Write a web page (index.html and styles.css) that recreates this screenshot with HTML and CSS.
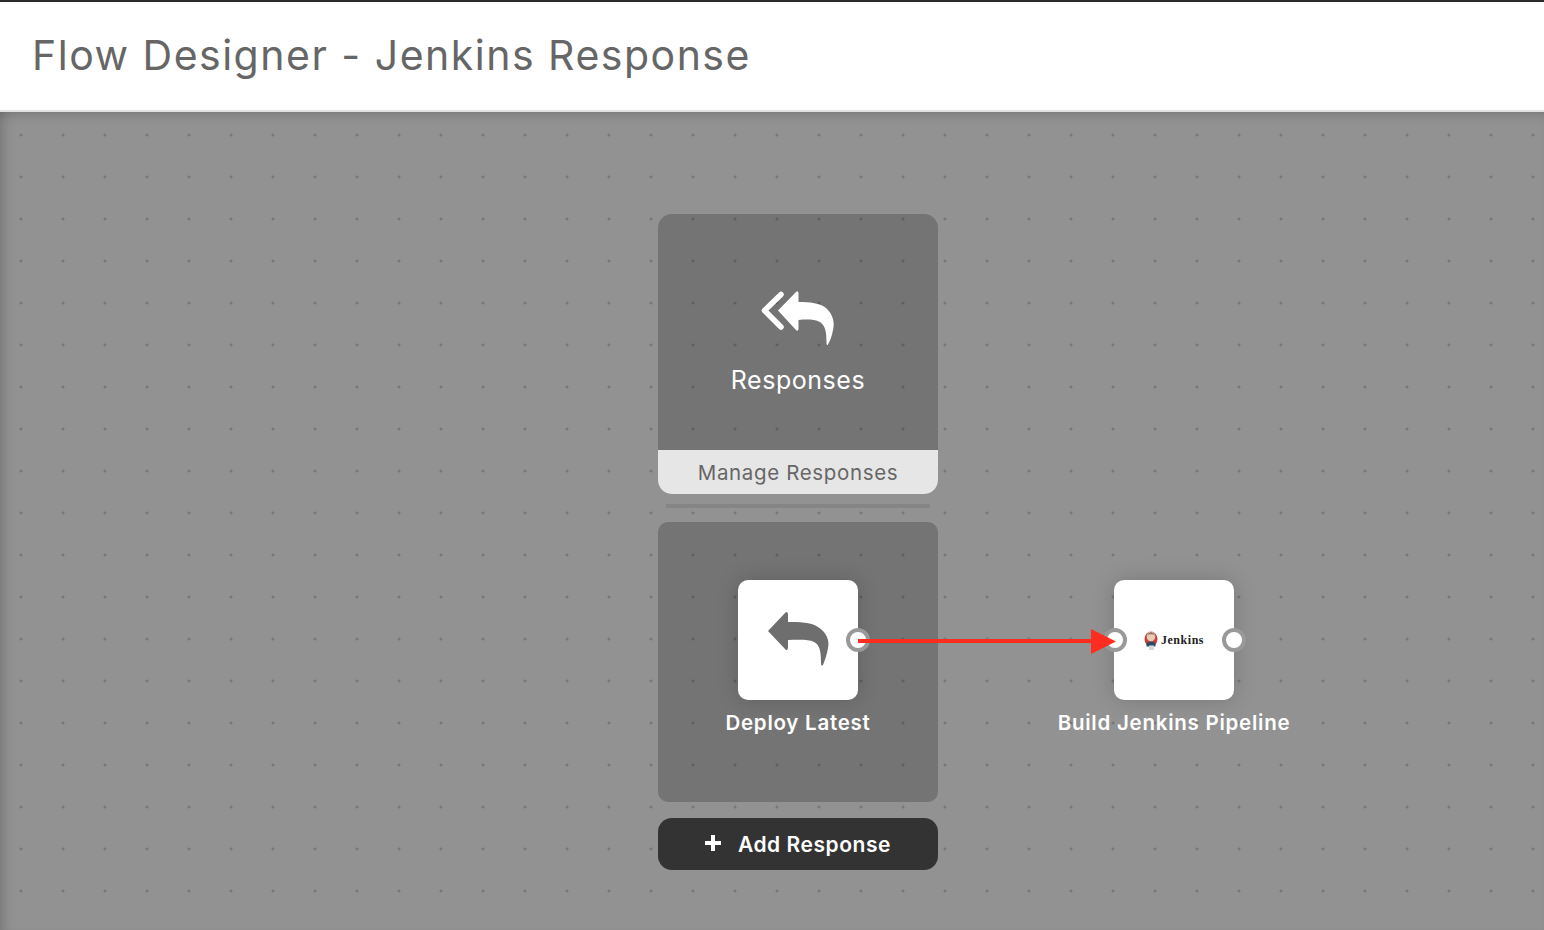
FILE: index.html
```html
<!DOCTYPE html>
<html lang="en">
<head>
<meta charset="utf-8">
<title>Flow Designer - Jenkins Response</title>
<link rel="stylesheet" href="styles.css">
</head>
<body>
<header class="topbar">
  <h1 class="title">Flow Designer - Jenkins Response</h1>
</header>
<main class="canvas">
  <div class="stack">
    <section class="panel panel-responses">
      <div class="panel-body">
        <svg class="icon-double" viewBox="0 0 80 60" aria-hidden="true">
          <path class="chevron" d="M23 6.5 6.5 22.5 23 39"/>
          <path class="fill-white" d="M20 22.5 38 4Q40 2 40.5 5V14C52 14 62 15 68 20C75 26 77 35 75 42C74 48 72 53 70 56.500Q69 58 68.500 55.500C68.500 46 68 38 62 34C56 31 48 31.500 40.500 32V41Q40 44 38 42Z"/>
        </svg>
        <div class="panel-title">Responses</div>
      </div>
      <button class="panel-footer" type="button">Manage Responses</button>
    </section>
    <div class="divider"></div>
    <section class="panel panel-nodes">
      <div class="node">
        <svg class="icon-reply" viewBox="0 0 120 120" aria-hidden="true">
          <path d="M30 51 47.500 32.500Q49.500 31 50 34V42C62 42 72 42 80 47C88 52 92 60 90 68C89 74 87 80 85 85Q83 87 83 83C83 72 82 65 76 62C70 59 60 60 50 60V68Q49.500 71 47.500 69.500Z"/>
        </svg>
        <span class="port port-right"></span>
      </div>
      <div class="node-label">Deploy Latest</div>
    </section>
    <button class="add-btn" type="button">
      <svg class="plus" viewBox="0 0 16 16" aria-hidden="true"><path d="M6 0H10V6H16V10H10V16H6V10H0V6H6Z"/></svg>
      <span>Add Response</span>
    </button>
  </div>

  <div class="free-node">
    <div class="node">
      <div class="jenkins">
        <svg class="butler" viewBox="0 0 14 20" aria-hidden="true">
          <ellipse cx="7" cy="9" rx="6.500" ry="7.500" fill="#c4423e"/>
          <ellipse cx="7" cy="6.500" rx="4.300" ry="5" fill="#e8cdb4"/>
          <path d="M2.800 5.500Q7 -1.500 11.200 5.500Q7 3 2.800 5.500Z" fill="#8a7466"/>
          <path d="M2.500 13Q7 10 11.500 13V16.500H2.500Z" fill="#2c4a63"/>
          <path d="M5 15.500H10V20H5Z" fill="#d8d8d8"/>
        </svg>
        <span class="jenkins-name">Jenkins</span>
      </div>
      <span class="port port-left"></span>
      <span class="port port-right"></span>
    </div>
    <div class="node-label">Build Jenkins Pipeline</div>
  </div>

  <svg class="connector" width="262" height="30" viewBox="0 0 262 30" aria-hidden="true">
    <rect x="0" y="12" width="236" height="4" fill="#ff2d1f"/>
    <path d="M233 2 258 14.500 233 27Z" fill="#ff2d1f"/>
  </svg>
</main>
</body>
</html>
```

FILE: styles.css
```css
* { box-sizing: border-box; }

html, body {
  margin: 0;
  height: 100%;
  overflow: hidden;
}

body {
  display: flex;
  flex-direction: column;
  font-family: "Inter", "Liberation Sans", sans-serif;
  background: #929292;
}

.topbar {
  flex: none;
  height: 112px;
  background: #fff;
  border-top: 2px solid #2b2b2b;
  border-bottom: 2px solid #e2e2e2;
  display: flex;
  align-items: center;
  padding: 0 0 2px 32px;
}

.title {
  margin: 0;
  font-size: 41px;
  font-weight: 400;
  color: #666;
  letter-spacing: 1.5px;
}

.canvas {
  position: relative;
  flex: 1;
  padding: 102px 0 0 658px;
  background-color: #929292;
  background-image: radial-gradient(circle, #777 0, #777 1.2px, transparent 1.8px);
  background-size: 42px 42px;
  background-position: 0 2px;
  box-shadow: inset 0 10px 12px -8px rgba(0, 0, 0, .18), inset 12px 0 12px -8px rgba(0, 0, 0, .16);
}

.stack {
  width: 280px;
  display: flex;
  flex-direction: column;
}

.panel {
  background: rgba(0, 0, 0, .2);
  width: 280px;
}

.panel-responses {
  height: 280px;
  border-radius: 14px;
  overflow: hidden;
  display: flex;
  flex-direction: column;
}

.panel-body {
  flex: 1;
  display: flex;
  flex-direction: column;
  align-items: center;
  padding-top: 74px;
}

.icon-double {
  width: 80px;
  height: 60px;
  display: block;
}

.chevron {
  fill: none;
  stroke: #fff;
  stroke-width: 5.500;
  stroke-linecap: round;
  stroke-linejoin: round;
}

.fill-white { fill: #fff; }

.panel-title {
  margin-top: 16px;
  font-size: 25px;
  line-height: 32px;
  letter-spacing: .55px;
  color: #fff;
}

.panel-footer {
  flex: none;
  height: 44px;
  border: 0;
  padding: 0;
  background: #e6e6e6;
  color: #666;
  font: inherit;
  font-size: 20.500px;
  letter-spacing: .65px;
  text-align: center;
}

.divider {
  height: 4px;
  margin: 10px 8px 14px;
  background: #858585;
}

.panel-nodes {
  height: 280px;
  border-radius: 10px;
  display: flex;
  flex-direction: column;
  align-items: center;
  padding-top: 58px;
}

.node {
  position: relative;
  flex: none;
  width: 120px;
  height: 120px;
  background: #fff;
  border-radius: 10px;
  box-shadow: 0 0 22px rgba(0, 0, 0, .18);
  display: flex;
  align-items: center;
  justify-content: center;
}

.icon-reply {
  position: absolute;
  inset: 0;
  width: 120px;
  height: 120px;
  fill: #6e6e6e;
}

.port {
  position: absolute;
  top: 48px;
  width: 24px;
  height: 24px;
  border-radius: 50%;
  background: #fff;
  border: 4px solid #999;
}

.port-left { left: -11px; }
.port-right { right: -12px; }

.node-label {
  margin-top: 9px;
  font-size: 20.500px;
  line-height: 28px;
  font-weight: 600;
  letter-spacing: .75px;
  color: #fff;
  white-space: nowrap;
  text-align: center;
}

.add-btn {
  margin-top: 16px;
  height: 52px;
  border: 0;
  border-radius: 14px;
  background: #333;
  color: #fff;
  font: inherit;
  font-size: 21px;
  font-weight: 600;
  letter-spacing: .55px;
  display: flex;
  align-items: center;
  justify-content: center;
  gap: 17px;
}

.plus {
  width: 16px;
  height: 16px;
  fill: #fff;
  margin-top: -2px;
}

.free-node {
  position: absolute;
  left: 1114px;
  top: 468px;
  width: 120px;
  display: flex;
  flex-direction: column;
  align-items: center;
}

.jenkins {
  display: flex;
  align-items: center;
  gap: 3px;
}

.butler {
  width: 14px;
  height: 20px;
  display: block;
}

.jenkins-name {
  font-family: "Liberation Serif", serif;
  font-weight: 700;
  font-size: 12px;
  letter-spacing: .55px;
  color: #222;
}

.connector {
  position: absolute;
  left: 858px;
  top: 515px;
}
```
